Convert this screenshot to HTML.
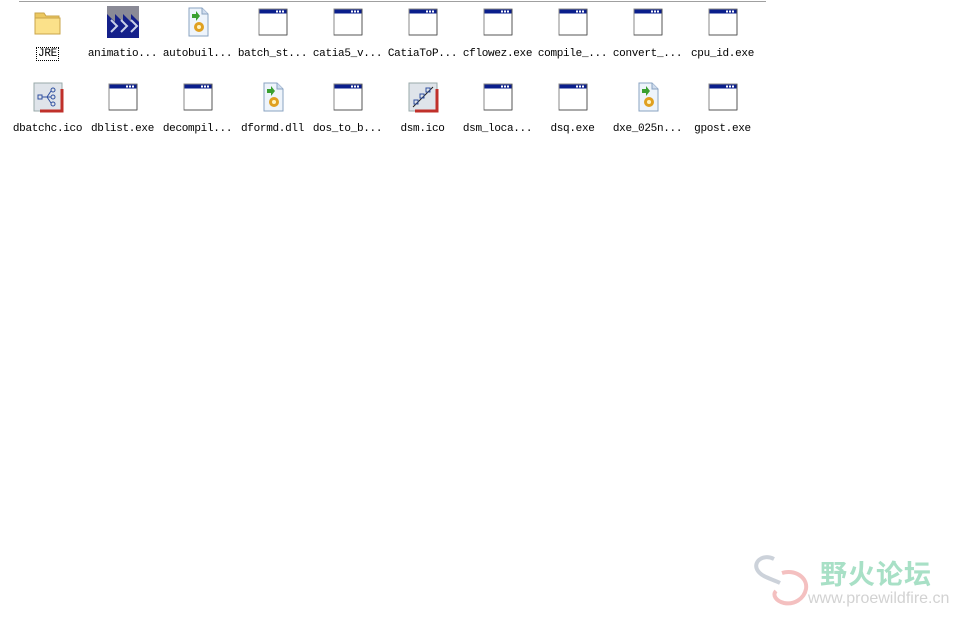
<!DOCTYPE html>
<html><head><meta charset="utf-8"><style>
body{margin:0;width:962px;height:618px;background:#fff;position:relative;overflow:hidden;font-family:"Liberation Mono","Noto Sans CJK SC",monospace;}
.top{position:absolute;left:19px;top:1px;width:747px;height:1px;background:#a0a0a0}
.it{position:absolute;width:75px;text-align:center}
.it svg{display:block;margin:0 auto;width:32px;height:32px}
.it span{display:inline-block;margin-top:10px;font-size:11px;color:#000;letter-spacing:-0.3px;white-space:nowrap}
.jre{outline:1px dotted #000;padding:0 1px}
.wm1{position:absolute;left:820px;top:553px;font-family:"Noto Sans CJK SC",sans-serif;font-weight:bold;font-size:27px;color:#a8e0c6;letter-spacing:1px}
.wm2{position:absolute;left:808px;top:590px;font-family:"Liberation Sans",sans-serif;font-size:16px;color:#d2d2d2}
</style></head><body>
<div class="top"></div>
<svg width="0" height="0" style="position:absolute"><defs>
<g id="win"><rect x="2" y="3" width="28" height="26" fill="#fff" stroke="#888"/><rect x="2.5" y="3.5" width="27" height="4" fill="#0a1e8c"/><rect x="22" y="4.5" width="2" height="2" fill="#fff"/><rect x="25" y="4.5" width="2" height="2" fill="#fff"/><rect x="19" y="4.5" width="2" height="2" fill="#fff"/><line x1="2" y1="29" x2="30" y2="29" stroke="#555"/><line x1="30" y1="3" x2="30" y2="29" stroke="#555"/></g>
<g id="dll"><path d="M7 2h13l6 6v22H7z" fill="#eef4fb" stroke="#8aa3c2"/><path d="M20 2v6h6" fill="#d0ddee" stroke="#8aa3c2"/><circle cx="17" cy="21" r="5" fill="#e0a020"/><circle cx="17" cy="21" r="2" fill="#fff3c0"/><path d="M10 8l4 0 0-3 4 5-4 5 0-3-4 0z" fill="#3aa030"/></g>
<g id="ico"><rect x="2" y="2" width="28" height="28" fill="#dfe4ea" stroke="#9aa"/><path d="M30 8v22H8" fill="none" stroke="#c0302a" stroke-width="3"/></g>
</defs></svg>

<div class="it" style="left:10px;top:6px"><svg viewBox="0 0 32 32"><path d="M3 7h9l2 3h13v18H3z" fill="#ecc860" stroke="#c9a44a"/><path d="M3 12h25v16H3z" fill="#fbe18a" stroke="#c9a44a"/></svg><span class="jre">JRE</span></div>
<div class="it" style="left:85px;top:6px"><svg viewBox="0 0 32 32"><rect x="0" y="0" width="32" height="32" fill="#8a8a96"/><path d="M0 32V8l8 8V8l8 8V8l8 8V8l8 8v16z" fill="#14208a"/><path d="M4 14l6 6-6 6M14 14l6 6-6 6M24 14l6 6-6 6" fill="none" stroke="#c8d0e8" stroke-width="2"/></svg><span>animatio...</span></div>
<div class="it" style="left:160px;top:6px"><svg viewBox="0 0 32 32"><use href="#dll"/></svg><span>autobuil...</span></div>
<div class="it" style="left:235px;top:6px"><svg viewBox="0 0 32 32"><use href="#win"/></svg><span>batch_st...</span></div>
<div class="it" style="left:310px;top:6px"><svg viewBox="0 0 32 32"><use href="#win"/></svg><span>catia5_v...</span></div>
<div class="it" style="left:385px;top:6px"><svg viewBox="0 0 32 32"><use href="#win"/></svg><span>CatiaToP...</span></div>
<div class="it" style="left:460px;top:6px"><svg viewBox="0 0 32 32"><use href="#win"/></svg><span>cflowez.exe</span></div>
<div class="it" style="left:535px;top:6px"><svg viewBox="0 0 32 32"><use href="#win"/></svg><span>compile_...</span></div>
<div class="it" style="left:610px;top:6px"><svg viewBox="0 0 32 32"><use href="#win"/></svg><span>convert_...</span></div>
<div class="it" style="left:685px;top:6px"><svg viewBox="0 0 32 32"><use href="#win"/></svg><span>cpu_id.exe</span></div>

<div class="it" style="left:10px;top:81px"><svg viewBox="0 0 32 32"><use href="#ico"/><rect x="6" y="14" width="4" height="4" fill="none" stroke="#3050a0"/><path d="M10 16h5l4-6M15 16h4M15 16l4 6" stroke="#3050a0" fill="none"/><circle cx="21" cy="9" r="2" fill="none" stroke="#3050a0"/><circle cx="21" cy="16" r="2" fill="none" stroke="#3050a0"/><circle cx="21" cy="23" r="2" fill="none" stroke="#3050a0"/></svg><span>dbatchc.ico</span></div>
<div class="it" style="left:85px;top:81px"><svg viewBox="0 0 32 32"><use href="#win"/></svg><span>dblist.exe</span></div>
<div class="it" style="left:160px;top:81px"><svg viewBox="0 0 32 32"><use href="#win"/></svg><span>decompil...</span></div>
<div class="it" style="left:235px;top:81px"><svg viewBox="0 0 32 32"><use href="#dll"/></svg><span>dformd.dll</span></div>
<div class="it" style="left:310px;top:81px"><svg viewBox="0 0 32 32"><use href="#win"/></svg><span>dos_to_b...</span></div>
<div class="it" style="left:385px;top:81px"><svg viewBox="0 0 32 32"><use href="#ico"/><path d="M6 26L26 6" stroke="#222"/><rect x="7" y="19" width="4" height="4" fill="none" stroke="#3050a0"/><rect x="13" y="13" width="4" height="4" fill="none" stroke="#3050a0"/><rect x="19" y="7" width="4" height="4" fill="none" stroke="#3050a0"/></svg><span>dsm.ico</span></div>
<div class="it" style="left:460px;top:81px"><svg viewBox="0 0 32 32"><use href="#win"/></svg><span>dsm_loca...</span></div>
<div class="it" style="left:535px;top:81px"><svg viewBox="0 0 32 32"><use href="#win"/></svg><span>dsq.exe</span></div>
<div class="it" style="left:610px;top:81px"><svg viewBox="0 0 32 32"><use href="#dll"/></svg><span>dxe_025n...</span></div>
<div class="it" style="left:685px;top:81px"><svg viewBox="0 0 32 32"><use href="#win"/></svg><span>gpost.exe</span></div>

<svg style="position:absolute;left:752px;top:553px" width="60" height="56" viewBox="0 0 60 56"><path d="M22 6C10 0 0 10 6 18c4 6 14 8 22 12" fill="none" stroke="#ccd2da" stroke-width="4"/><path d="M30 20c12-4 26 4 24 16-2 10-12 16-22 14-8-2-12-8-8-12" fill="none" stroke="#f4c0c0" stroke-width="4"/></svg>
<div class="wm1">野火论坛</div>
<div class="wm2">www.proewildfire.cn</div>
</body></html>
